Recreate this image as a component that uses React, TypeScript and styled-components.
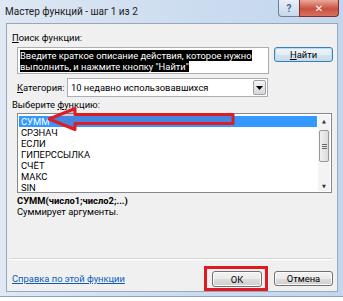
import styled, { createGlobalStyle } from "styled-components";

const GlobalStyle = createGlobalStyle`
  body {
    margin: 0;
    background: #ffffff;
    font-family: Roboto, "Noto Sans", "DejaVu Sans", sans-serif;
  }
`;

const functions = ["СУММ", "СРЗНАЧ", "ЕСЛИ", "ГИПЕРССЫЛКА", "СЧЁТ", "МАКС", "SIN"];

export default function App() {
  return (
    <>
      <GlobalStyle />
      <Window>
        <TitleBar>
          <Title>Мастер функций - шаг 1 из 2</Title>
          <CaptionButtons>
            <HelpButton>?</HelpButton>
            <CloseButton>✕</CloseButton>
          </CaptionButtons>
        </TitleBar>
        <Client>
          <Label>
            <u>П</u>оиск функции:
          </Label>
          <SearchRow>
            <SearchBox>
              <Selected>Введите краткое описание действия, которое нужно</Selected>
              <br />
              <Selected>выполнить, и нажмите кнопку "Найти"</Selected>
            </SearchBox>
            <Button $default>
              <u>Н</u>айти
            </Button>
          </SearchRow>
          <CategoryRow>
            <CategoryLabel>
              <u>К</u>атегория:
            </CategoryLabel>
            <Combo>
              <ComboText>10 недавно использовавшихся</ComboText>
              <ComboArrow>
                <svg width="7" height="4" viewBox="0 0 7 4">
                  <path d="M0 0h7L3.5 4z" fill="#000" />
                </svg>
              </ComboArrow>
            </Combo>
          </CategoryRow>
          <Label $top={2}>
            Выберите <u>ф</u>ункцию:
          </Label>
          <ListWrap>
            <ListBox>
              <Items>
                {functions.map((name, i) => (
                  <Item key={name} $active={i === 0}>
                    {name}
                  </Item>
                ))}
              </Items>
              <ScrollBar>
                <ScrollArrow>▲</ScrollArrow>
                <Thumb>
                  <Grip />
                </Thumb>
                <ScrollArrow $bottom>▼</ScrollArrow>
              </ScrollBar>
            </ListBox>
            <Arrow width="190" height="26" viewBox="0 0 190 26">
              <path
                d="M2 13 L28 2.5 L28 8.5 L186 8.5 L186 17.5 L28 17.5 L28 23.5 Z"
                fill="rgba(110,100,160,0.35)"
                stroke="#e11b22"
                strokeWidth="3"
                strokeLinejoin="round"
              />
            </Arrow>
          </ListWrap>
          <Signature>СУММ(число1;число2;...)</Signature>
          <Description>Суммирует аргументы.</Description>
          <Separator />
          <Footer>
            <HelpLink>Справка по этой функции</HelpLink>
            <Buttons>
              <Marked>
                <Button $w={50} $h={16}>ОК</Button>
              </Marked>
              <Button>Отмена</Button>
            </Buttons>
          </Footer>
        </Client>
      </Window>
    </>
  );
}

const Window = styled.div`
  width: 343px;
  height: 297px;
  box-sizing: border-box;
  padding: 0 5px 4px 6px;
  display: flex;
  flex-direction: column;
  background: linear-gradient(90deg, #dfe8f4 0%, #cfdef0 45%, #c2d6ee 100%);
  border-bottom: 1px solid #8aa2c0;
`;

const TitleBar = styled.div`
  height: 23px;
  display: flex;
  align-items: flex-start;
  justify-content: space-between;
`;

const Title = styled.span`
  margin-top: 6px;
  margin-left: -1px;
  font-size: 10px;
  color: #1a1a1a;
`;

const CaptionButtons = styled.div`
  display: flex;
  margin-right: -1px;
`;

const CaptionButton = styled.div`
  height: 16px;
  display: flex;
  align-items: center;
  justify-content: center;
  border: 1px solid #6b7f99;
  border-top: none;
  font-size: 10px;
  font-weight: 700;
`;

const HelpButton = styled(CaptionButton)`
  width: 20px;
  border-right: none;
  border-radius: 0 0 0 4px;
  color: #4a6890;
  background: linear-gradient(#e6eef8, #c8d8ec);
`;

const CloseButton = styled(CaptionButton)`
  width: 38px;
  border-radius: 0 0 4px 0;
  color: #ffffff;
  border-color: #7a3030;
  background: linear-gradient(#e9a99a, #c95040 55%, #d97060);
`;

const Client = styled.div`
  flex: 1;
  display: flex;
  flex-direction: column;
  background: #f0f0f0;
  border: 1px solid #97a8bd;
  padding: 0 4px 0 5px;
  font-size: 9.4px;
  color: #000;
`;

const Label = styled.div<{ $top?: number }>`
  margin-top: ${(p) => p.$top ?? 8}px;
  height: 11px;
  line-height: 11px;
`;

const SearchRow = styled.div`
  margin-top: 4px;
  padding-left: 5px;
  display: flex;
  align-items: flex-start;
  gap: 5px;
`;

const SearchBox = styled.div`
  width: 252px;
  height: 27px;
  box-sizing: border-box;
  background: #fff;
  border: 1px solid #abadb3;
  padding: 2px 2px;
  line-height: 11px;
`;

const Selected = styled.span`
  background: #000;
  color: #fff;
`;

const Button = styled.div<{ $w?: number; $h?: number; $default?: boolean }>`
  width: ${(p) => p.$w ?? 59}px;
  height: ${(p) => p.$h ?? 15}px;
  box-sizing: border-box;
  display: flex;
  align-items: center;
  justify-content: center;
  border: 1px solid ${(p) => (p.$default ? "#3c7fb1" : "#707070")};
  border-radius: 3px;
  background: ${(p) =>
    p.$default
      ? "linear-gradient(#eef5fa 0%, #e2edf5 50%, #d3e3ef 51%, #c8dbea 100%)"
      : "linear-gradient(#f2f2f2 0%, #ebebeb 50%, #dddddd 51%, #cfcfcf 100%)"};
  box-shadow: inset 0 0 0 1px ${(p) => (p.$default ? "#b9dcf4" : "#fbfbfb")};
`;

const CategoryRow = styled.div`
  margin-top: 4px;
  padding-left: 5px;
  display: flex;
  align-items: center;
  height: 19px;
`;

const CategoryLabel = styled.span`
  width: 50px;
`;

const Combo = styled.div`
  width: 201px;
  height: 19px;
  box-sizing: border-box;
  display: flex;
  align-items: center;
  background: #fff;
  border: 1px solid #abadb3;
`;

const ComboText = styled.span`
  flex: 1;
  padding-left: 3px;
`;

const ComboArrow = styled.div`
  width: 13px;
  height: 15px;
  margin-right: 1px;
  display: flex;
  align-items: center;
  justify-content: center;
  border: 1px solid #9aa0a8;
  border-radius: 2px;
  box-sizing: border-box;
  background: linear-gradient(#f4f4f4, #d8d8d8);
`;

const ListWrap = styled.div`
  position: relative;
  margin-top: 3px;
  margin-left: 5px;
`;

const ListBox = styled.div`
  width: 315px;
  height: 80px;
  box-sizing: border-box;
  display: flex;
  background: #fff;
  border: 1px solid #828790;
`;

const Items = styled.div`
  flex: 1;
  padding: 2px 1px 0 1px;
`;

const Item = styled.div<{ $active?: boolean }>`
  height: 11px;
  line-height: 11px;
  padding-left: 2px;
  background: ${(p) => (p.$active ? "#3399ff" : "transparent")};
  color: ${(p) => (p.$active ? "#fff" : "#000")};
`;

const ScrollBar = styled.div`
  width: 12px;
  margin: 1px 1px 1px 0;
  display: flex;
  flex-direction: column;
  background: #f3f3f3;
`;

const ScrollArrow = styled.div<{ $bottom?: boolean }>`
  height: 11px;
  display: flex;
  align-items: center;
  justify-content: center;
  font-size: 5px;
  color: #333;
  margin-top: ${(p) => (p.$bottom ? "auto" : "0")};
`;

const Thumb = styled.div`
  margin: 4px 1px 0;
  height: 30px;
  display: flex;
  align-items: center;
  justify-content: center;
  border: 1px solid #979797;
  border-radius: 2px;
  background: linear-gradient(90deg, #f0f0f0, #dcdcdc);
`;

const Grip = styled.div`
  width: 5px;
  height: 5px;
  background: repeating-linear-gradient(#6a6a6a 0 1px, transparent 1px 2px);
`;

const Arrow = styled.svg`
  position: absolute;
  left: 30px;
  top: -7px;
`;

const Signature = styled.div`
  margin-top: 2px;
  padding-left: 5px;
  height: 11px;
  line-height: 11px;
  font-weight: 700;
`;

const Description = styled.div`
  padding-left: 5px;
  height: 12px;
  line-height: 12px;
`;

const Separator = styled.div`
  margin-top: auto;
  height: 1px;
  background: #d5d5d5;
  border-bottom: 1px solid #ffffff;
  margin-left: -3px;
`;

const Footer = styled.div`
  height: 31px;
  box-sizing: border-box;
  padding-top: 6px;
  display: flex;
  align-items: center;
  justify-content: space-between;
`;

const HelpLink = styled.span`
  color: #0b5cb8;
  text-decoration: underline;
`;

const Buttons = styled.div`
  display: flex;
  align-items: center;
  gap: 6px;
`;

const Marked = styled.div`
  padding: 2px 3px 1px 5px;
  border: 3px solid #e01a22;
`;
